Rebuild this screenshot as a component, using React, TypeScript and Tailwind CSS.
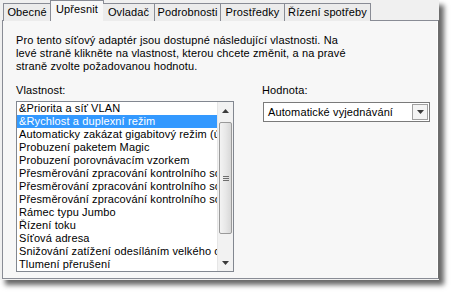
import * as React from "react";

const tabs = ["Obecné", "Upřesnit", "Ovladač", "Podrobnosti", "Prostředky", "Řízení spotřeby"];
const tabW = [48, 54, 52, 66, 64, 86];

const items = [
  "&Priorita a síť VLAN",
  "&Rychlost a duplexní režim",
  "Automaticky zakázat gigabitový režim (úsporný režim)",
  "Probuzení paketem Magic",
  "Probuzení porovnávacím vzorkem",
  "Přesměrování zpracování kontrolního součtu IPv4",
  "Přesměrování zpracování kontrolního součtu TCP",
  "Přesměrování zpracování kontrolního součtu UDP",
  "Rámec typu Jumbo",
  "Řízení toku",
  "Síťová adresa",
  "Snižování zatížení odesíláním velkého objemu",
  "Tlumení přerušení",
];

/* ----------------- Scrollbar (Win7 look) ----------------- */
function Arrow({ up }: { up?: boolean }) {
  return (
    <svg width="7" height="4" viewBox="0 0 7 4">
      <path d={up ? "M0 4 L3.5 0 L7 4 Z" : "M0 0 L3.5 4 L7 0 Z"} fill="#3b3b3b" />
    </svg>
  );
}

function Scrollbar() {
  return (
    <div className="flex w-[16px] flex-col border-l border-[#e6e6e6] bg-[#f2f2f2]">
      <div className="flex h-[17px] items-center justify-center">
        <Arrow up />
      </div>
      <div className="mx-[1px] mt-[3px] flex h-[112px] items-center justify-center rounded-[2px] border border-[#9a9a9a] bg-gradient-to-r from-[#f3f3f3] via-[#e8e8e8] to-[#d8d8d8]">
        <div className="flex flex-col gap-[1px]">
          <div className="h-[1px] w-[6px] bg-[#6e6e6e]" />
          <div className="h-[1px] w-[6px] bg-[#6e6e6e]" />
          <div className="h-[1px] w-[6px] bg-[#6e6e6e]" />
        </div>
      </div>
      <div className="flex-1" />
      <div className="flex h-[17px] items-center justify-center">
        <Arrow />
      </div>
    </div>
  );
}

export default function App() {
  return (
    <div
      className="relative h-[295px] w-[455px] bg-white text-[11px] leading-[13px] tracking-[0.12px] text-black"
      style={{ fontFamily: '"Liberation Sans", Arial, sans-serif' }}
    >
      <div className="h-[280px] w-[439px] bg-[#f0f0f0] shadow-[5px_5px_5px_rgba(0,0,0,0.6)]">
        {/* tab strip */}
        <div className="relative z-10 flex h-[21px] items-end pl-[3px]">
          {tabs.map((t, i) => {
            const sel = i === 1;
            return (
              <div
                key={t}
                style={{ width: tabW[i] }}
                className={
                  sel
                    ? "-mx-[1px] flex h-[21px] items-start justify-center border border-b-0 border-[#898c95] bg-[#f7f7f7] pt-[2px]"
                    : "flex h-[18px] items-center justify-center border border-b-0 border-l-0 border-[#898c95] bg-[#ececec] first:border-l"
                }
              >
                {t}
              </div>
            );
          })}
        </div>

        {/* panel */}
        <div className="-mt-[1px] ml-[2px] h-[259px] w-[437px] border border-[#898c95] border-r-[#6d6d6d] bg-[#f7f7f7] shadow-[inset_-1px_0_0_#ffffff]">
          <div className="pl-[13px] pt-[13px]">
            <p>
              Pro tento síťový adaptér jsou dostupné následující vlastnosti. Na
              <br />
              levé straně klikněte na vlastnost, kterou chcete změnit, a na pravé
              <br />
              straně zvolte požadovanou hodnotu.
            </p>

            <div className="mt-[11px] flex">
              {/* left column */}
              <div className="w-[218px]">
                <div>Vlastnost:</div>
                <div className="mt-[4px] flex h-[171px] border border-[#828790] bg-white">
                  <div className="flex-1 overflow-hidden">
                    {items.map((it, i) => (
                      <div
                        key={it}
                        className={
                          i === 1
                            ? "h-[13px] whitespace-nowrap bg-[#3399ff] pl-[2px] text-white"
                            : "h-[13px] whitespace-nowrap pl-[2px]"
                        }
                      >
                        {it}
                      </div>
                    ))}
                  </div>
                  <Scrollbar />
                </div>
              </div>

              {/* right column */}
              <div className="ml-[28px]">
                <div>Hodnota:</div>
                <div className="ml-[1px] mt-[5px] flex h-[20px] w-[167px] items-center border border-[#7a7a7a] bg-white">
                  <div className="flex-1 pl-[4px]">Automatické vyjednávání</div>
                  <div className="mr-[1px] flex h-[16px] w-[16px] items-center justify-center border border-[#a0a0a0] bg-[#f4f4f4]">
                    <Arrow />
                  </div>
                </div>
              </div>
            </div>
          </div>
        </div>
      </div>
    </div>
  );
}
